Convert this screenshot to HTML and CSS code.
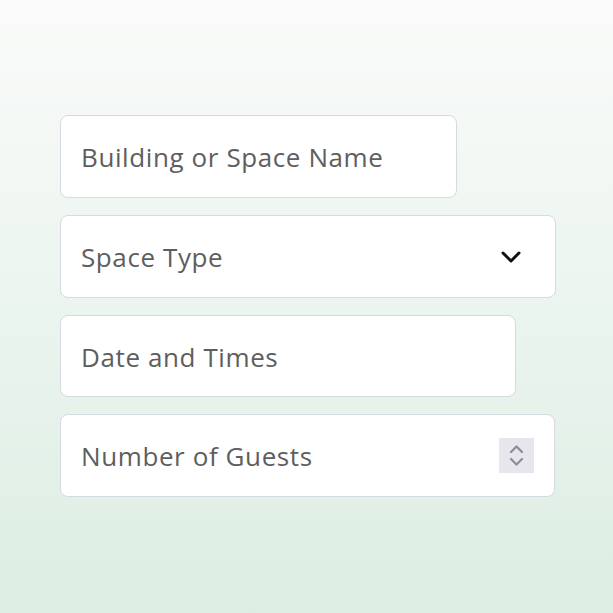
FILE: index.html
```html
<!DOCTYPE html>
<html>
<head>
<meta charset="utf-8">
<link rel="stylesheet" href="styles.css">
</head>
<body>
<div class="page">
  <div class="form">
    <div class="field w1"><span class="label">Building or Space Name</span></div>
    <div class="field w2"><span class="label">Space Type</span>
      <svg class="chev" width="22" height="14" viewBox="0 0 22 14"><path d="M3 3 L11 11 L19 3" fill="none" stroke="#111" stroke-width="3" stroke-linecap="round" stroke-linejoin="round"/></svg>
    </div>
    <div class="field w3"><span class="label">Date and Times</span></div>
    <div class="field w4"><span class="label">Number of Guests</span>
      <div class="spin">
        <svg width="35" height="35" viewBox="0 0 35 35"><path d="M12 14 L17.5 8.5 L23 14" fill="none" stroke="#8c8c96" stroke-width="2.2" stroke-linecap="round" stroke-linejoin="round"/><path d="M12 21 L17.5 26.5 L23 21" fill="none" stroke="#8c8c96" stroke-width="2.2" stroke-linecap="round" stroke-linejoin="round"/></svg>
      </div>
    </div>
  </div>
</div>
</body>
</html>
```

FILE: styles.css
```css
html, body {
  margin: 0;
  padding: 0;
}
.page {
  width: 613px;
  height: 613px;
  background: linear-gradient(180deg, #fafbfa 0%, #eef6f1 40%, #dcede3 100%);
  padding: 115px 0 0 60px;
  box-sizing: border-box;
  font-family: "Open Sans", "Liberation Sans", sans-serif;
}
.form {
  display: flex;
  flex-direction: column;
  gap: 17px;
}
.field {
  box-sizing: border-box;
  height: 83px;
  background: #fff;
  border: 1.5px solid #d6d9df;
  border-radius: 8px;
  display: flex;
  align-items: center;
  justify-content: space-between;
  padding: 0 20px 0 20px;
}
.w1 { width: 397px; }
.w2 { width: 496px; padding-right: 33px; }
.w3 { width: 456px; height: 82px; }
.w4 { width: 495px; padding-right: 20px; }
.label {
  font-size: 26px;
  color: #5e5e5e;
  letter-spacing: 0.6px;
  line-height: 1;
  padding-top: 1px;
}
.chev { display: block; }
.spin {
  width: 35px;
  height: 35px;
  background: #e6e6ec;
}
.spin svg { display: block; }
```
